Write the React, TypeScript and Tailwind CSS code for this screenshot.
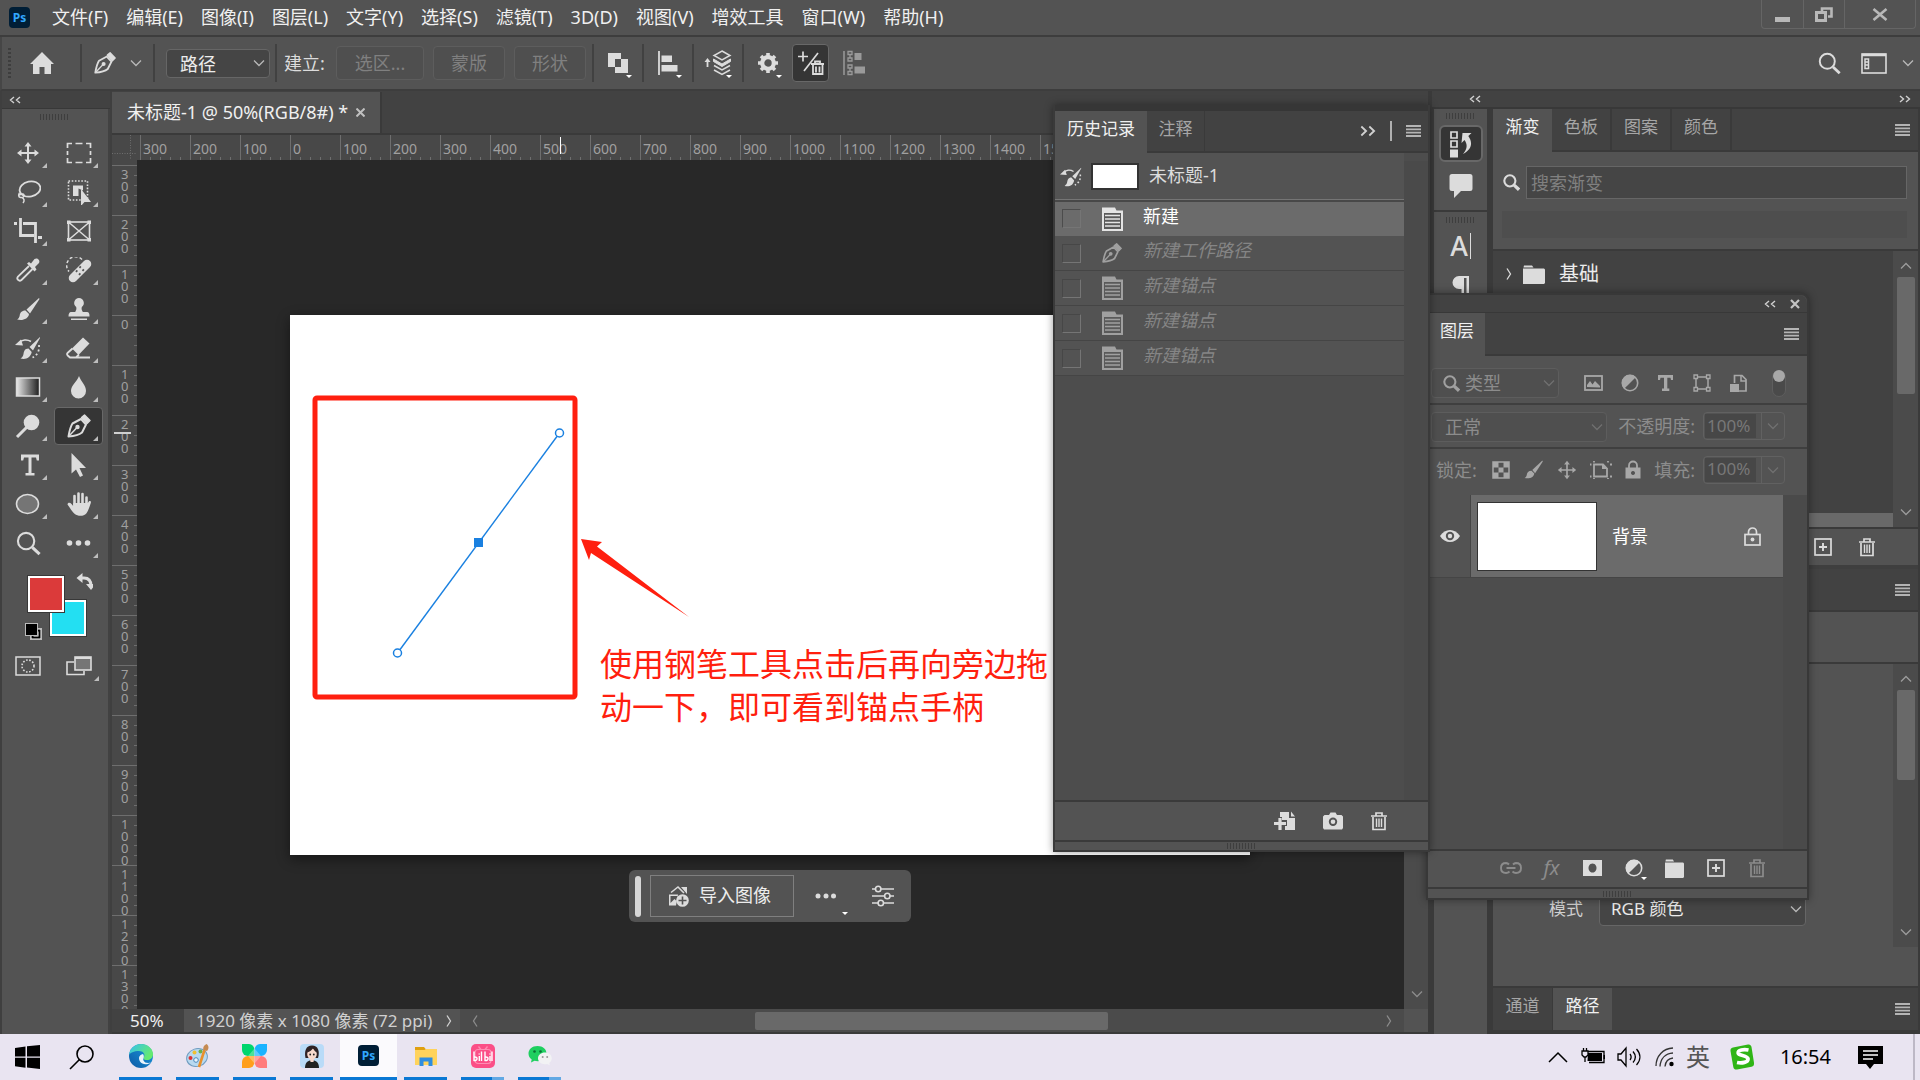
import { useState } from 'react';
import type { ReactNode } from 'react';
import clsx from 'clsx';

const MENUS = ['文件(F)', '编辑(E)', '图像(I)', '图层(L)', '文字(Y)', '选择(S)', '滤镜(T)', '3D(D)', '视图(V)', '增效工具', '窗口(W)', '帮助(H)'];

const H_LABELS = [300, 200, 100, 0, 100, 200, 300, 400, 500, 600, 700, 800, 900, 1000, 1100, 1200, 1300, 1400, 1500, 1600, 1700, 1800, 1900, 2000, 2100, 2200];
const V_LABELS = [300, 200, 100, 0, 100, 200, 300, 400, 500, 600, 700, 800, 900, 1000, 1100, 1200, 1300];

type IconProps = { w?: number; h?: number; className?: string; children: ReactNode };

function Icon({ w = 26, h = 26, className, children }: IconProps) {
  return (
    <svg width={w} height={h} viewBox={`0 0 ${w} ${h}`} fill="none" stroke="none" className={clsx('shrink-0', className)} aria-hidden="true">
      {children}
    </svg>
  );
}

/* ---------- shared icons ---------- */

function Chevron({ dir = 'down', className = 'text-[#b8b8b8]' }: { dir?: 'down' | 'up' | 'left' | 'right'; className?: string }) {
  const d = {
    down: 'M1 3.5l5 5 5-5',
    up: 'M1 8.5l5-5 5 5',
    left: 'M8 0.5L4.500 6l3.500 5.500',
    right: 'M4 0.5L7.500 6 4 11.500',
  }[dir];
  return (
    <Icon w={12} h={12} className={className}>
      <path d={d} stroke="currentColor" strokeWidth="1.3" />
    </Icon>
  );
}

function DoubleChevron({ right = false, big = false }: { right?: boolean; big?: boolean }) {
  return (
    <svg width={big ? 16 : 12} height={big ? 12 : 8} viewBox="0 0 12 8" preserveAspectRatio="none" fill="none" stroke="#d0d0d0" strokeWidth="1.4" aria-hidden="true">
      <path d={right ? 'M1 1l3.500 3L1 7M7 1l3.500 3L7 7' : 'M5 1L1.500 4 5 7M11 1L7.500 4 11 7'} />
    </svg>
  );
}

function Hamburger() {
  return (
    <Icon w={15} h={12}>
      <path d="M0 1h15M0 4.300h15M0 7.600h15M0 11h15" stroke="#b4b4b4" strokeWidth="1.8" />
    </Icon>
  );
}

function Grip() {
  return <div className="h-[6px] w-[29px] shrink-0 bg-[repeating-linear-gradient(to_right,#3e3e3e_0_1px,transparent_1px_3px)]" />;
}

function PenIcon({ size = 26, className = 'text-[#dcdcdc]' }: { size?: number; className?: string }) {
  return (
    <svg width={size} height={size} viewBox="0 0 26 26" fill="none" className={clsx('shrink-0', className)} aria-hidden="true">
      <path d="M2.500 23.500c1-6 2-10 4-13L15 6l5 5.500-4 8c-3 2.500-7 3.500-13.500 4z" stroke="currentColor" strokeWidth="2" strokeLinejoin="round" />
      <path d="M15.500 4.500L18.500 2l5.500 5.500-3 3z" fill="currentColor" stroke="currentColor" strokeWidth="1.500" strokeLinejoin="round" />
      <path d="M3 23l8-8.500" stroke="currentColor" strokeWidth="1.500" />
      <circle cx="11.500" cy="14" r="2.200" fill="currentColor" />
    </svg>
  );
}

function HistoryBrush({ size = 26 }: { size?: number }) {
  return (
    <svg width={size} height={size} viewBox="0 0 26 26" fill="none" className="shrink-0 text-[#dcdcdc]" aria-hidden="true">
      <path d="M25 2L14.500 12l3.500 3.500L25 3z" fill="currentColor" />
      <path d="M13.500 13.500c-4 0-4.500 3-5 5.500-.3 2-1.500 3.500-3 4.500 5 1.500 10-.500 11.200-6.500z" fill="currentColor" />
      <path d="M0 10l6-5.500 2 6z" fill="currentColor" />
      <path d="M4 8c3-3.500 8-4 12-1.500" stroke="currentColor" strokeWidth="1.600" />
      <path d="M24 10c.5 6-1.500 10-6.500 12.500" stroke="currentColor" strokeWidth="1.800" strokeDasharray="2 2.500" />
    </svg>
  );
}

function BrushIcon({ size = 26, className = 'text-[#dcdcdc]' }: { size?: number; className?: string }) {
  return (
    <svg width={size} height={size} viewBox="0 0 26 26" fill="currentColor" className={clsx('shrink-0', className)} aria-hidden="true">
      <path d="M24 2L11.500 13.500l3.500 4L24.500 3z" />
      <path d="M10.500 14.500c-4 0-5.500 2.500-5.800 5-.2 1.800-1.400 3.500-2.700 4 5.500 1.500 11.500-.500 12-5.500z" />
    </svg>
  );
}

function MagnifierIcon({ size = 26, heavy = false, className = 'text-[#dcdcdc]' }: { size?: number; heavy?: boolean; className?: string }) {
  return (
    <svg width={size} height={size} viewBox="0 0 26 26" fill="none" stroke="currentColor" className={clsx('shrink-0', className)} aria-hidden="true">
      <circle cx="10.500" cy="10.500" r="8.500" strokeWidth={heavy ? 3.2 : 2.2} />
      <path d="M17 17l7.500 7" strokeWidth={heavy ? 5 : 3.2} />
    </svg>
  );
}

function TrashIcon({ className = 'text-[#dcdcdc]' }: { className?: string }) {
  return (
    <Icon w={18} h={20} className={className}>
      <path d="M1 5h16M6 4.500V2h6v2.500" stroke="currentColor" strokeWidth="1.700" />
      <path d="M3 6v12.500h12V6" stroke="currentColor" strokeWidth="1.700" />
      <path d="M6.500 7.500V16M9 7.500V16M11.500 7.500V16" stroke="currentColor" strokeWidth="1.400" />
    </Icon>
  );
}

function AddIcon() {
  return (
    <Icon w={18} h={18}>
      <rect x="1" y="1" width="16" height="16" stroke="#dcdcdc" strokeWidth="1.700" />
      <path d="M5 9h8M9 5v8" stroke="#dcdcdc" strokeWidth="1.900" />
    </Icon>
  );
}

function FolderIcon({ w = 22 }: { w?: number }) {
  return (
    <svg width={w} height="19" viewBox="0 0 22 19" preserveAspectRatio="none" fill="#dcdcdc" aria-hidden="true">
      <path d="M1 0.500h8l1.500 2H0.500zM0 3.500h21l1 1V18l-1 1H0z" />
    </svg>
  );
}

function HalfCircle({ className = 'text-[#dcdcdc]' }: { className?: string }) {
  return (
    <Icon w={18} h={18} className={className}>
      <circle cx="9" cy="9" r="7.700" stroke="currentColor" strokeWidth="1.600" />
      <path d="M14.800 3.200A8.200 8.200 0 0 0 3.200 14.800z" fill="currentColor" />
    </Icon>
  );
}

function MoveIcon({ size = 24, className = 'text-[#dcdcdc]' }: { size?: number; className?: string }) {
  return (
    <svg width={size} height={size} viewBox="0 0 24 24" fill="currentColor" className={clsx('shrink-0', className)} aria-hidden="true">
      <path d="M12 1l3.500 4.500H13V11h5.500V8.500L23 12l-4.500 3.500V13H13v5.500h2.500L12 23l-3.500-4.500H11V13H5.500v2.500L1 12l4.500-3.500V11H11V5.500H8.500z" />
    </svg>
  );
}

function PsLogo({ className }: { className: string }) {
  return (
    <span className={clsx('flex items-center justify-center rounded-[4px] bg-[#001e36] font-bold text-[#31a8ff]', className)}>Ps</span>
  );
}

/* ---------- title / menu bar ---------- */

function MenuBar() {
  return (
    <header className="flex h-[37px] shrink-0 items-start border-b-2 border-[#3d3d3d] bg-[#535353]">
      <div className="flex h-[35px] items-center pl-[9px]">
        <PsLogo className="mr-[13px] size-[21px] text-xs leading-none" />
        <nav className="flex pb-[2px]">
          {MENUS.map((m) => (
            <button key={m} type="button" className="px-[9px] text-lg leading-[26px] text-[#f0f0f0]">{m}</button>
          ))}
        </nav>
      </div>
      <div className="mr-[4px] ml-auto flex h-[29px] divide-x divide-[#656565] rounded-b border border-t-0 border-[#656565]">
        <button type="button" aria-label="最小化" className="flex w-[42px] items-end justify-center pb-[6px]">
          <span className="h-[5px] w-[15px] bg-[#b8b8b8]" />
        </button>
        <button type="button" aria-label="还原" className="flex w-[41px] items-center justify-center">
          <Icon w={18} h={15}>
            <path d="M7 5V1.500h9.500v8H13" stroke="#b8b8b8" strokeWidth="2.600" />
            <rect x="1.500" y="5.500" width="9" height="8" stroke="#b8b8b8" strokeWidth="3" />
          </Icon>
        </button>
        <button type="button" aria-label="关闭" className="flex w-[70px] items-center justify-center">
          <Icon w={16} h={13}>
            <path d="M1.500 1l13 11M14.500 1l-13 11" stroke="#b8b8b8" strokeWidth="2.600" />
          </Icon>
        </button>
      </div>
    </header>
  );
}

/* ---------- options bar ---------- */

function Sep() {
  return <div className="h-[38px] w-[2px] shrink-0 bg-[#414141]" />;
}

function DropMark() {
  return <span className="absolute right-0 bottom-0 border-x-[3px] border-t-[3px] border-x-transparent border-t-white" />;
}

function OptionIcon({ label, children }: { label: string; children: ReactNode }) {
  return (
    <div className="flex w-[48px] justify-center">
      <button type="button" aria-label={label} className="relative flex h-[30px] w-[28px] items-center justify-center">
        {children}
        <DropMark />
      </button>
    </div>
  );
}

function OptionsBar() {
  return (
    <div className="flex h-[54px] shrink-0 items-center border-b-2 border-l-2 border-b-[#3d3d3d] border-l-[#464646] bg-[#535353] text-lg">
      <div className="ml-[6px] h-[30px] w-[3px] bg-[repeating-linear-gradient(to_bottom,#3e3e3e_0_2px,transparent_2px_4px)]" />
      <button type="button" aria-label="主页" className="ml-[18px]">
        <Icon w={26} h={24}>
          <path d="M13 1L25 13h-3v10h-6.500v-7h-5v7H4V13H1z" fill="#dcdcdc" />
        </Icon>
      </button>
      <div className="ml-[25px]"><Sep /></div>
      <button type="button" aria-label="钢笔工具" className="ml-[11px] flex items-center gap-[13px]">
        <PenIcon size={24} />
        <Chevron />
      </button>
      <div className="mr-[11px] ml-[11px]"><Sep /></div>
      <label className="relative flex items-center">
        <span className="sr-only">工具模式</span>
        <select className="h-[29px] w-[104px] appearance-none rounded border border-[#666] bg-[#454545] pl-[13px] text-lg text-[#ececec]">
          <option>路径</option>
        </select>
        <span className="pointer-events-none absolute right-[5px]"><Chevron /></span>
      </label>
      <div className="mr-[7px] ml-[5px]"><Sep /></div>
      <span className="w-[46px] text-[#dcdcdc]">建立:</span>
      <div className="ml-[6px] flex gap-[9px] text-[#808080]">
        <button type="button" disabled className="h-[34px] w-[88px] rounded border border-[#5d5d5d] bg-[#4f4f4f] leading-none">选区...</button>
        <button type="button" disabled className="h-[34px] w-[72px] rounded border border-[#5d5d5d] bg-[#4f4f4f] leading-none">蒙版</button>
        <button type="button" disabled className="h-[34px] w-[72px] rounded border border-[#5d5d5d] bg-[#4f4f4f] leading-none">形状</button>
      </div>
      <div className="ml-[6px] flex items-center">
        <Sep />
        <OptionIcon label="路径操作">
          <Icon w={22} h={22}>
            <path d="M1 1h13v6h7v14H8v-6H1zM8 7v8h6V7z" fill="#dcdcdc" fillRule="evenodd" />
          </Icon>
        </OptionIcon>
        <Sep />
        <OptionIcon label="路径对齐">
          <Icon w={22} h={24}>
            <path d="M2 0v24" stroke="#dcdcdc" strokeWidth="1.800" />
            <path d="M4.500 4.500h10.500V11H4.500zM4.500 14h16v6.500h-16z" fill="#dcdcdc" />
          </Icon>
        </OptionIcon>
        <Sep />
        <OptionIcon label="路径排列">
          <Icon w={28} h={26}>
            <path d="M3.500 17V10" stroke="#dcdcdc" strokeWidth="1.800" />
            <path d="M0.500 12l3-4 3 4z" fill="#dcdcdc" />
            <path d="M18 1l8 4.500-8 4.500-8-4.500z" stroke="#dcdcdc" strokeWidth="1.500" />
            <path d="M9.500 9l8.500 5 8.500-5v2.500L18 16.500l-8.500-5z" fill="#dcdcdc" stroke="#dcdcdc" />
            <path d="M10 15.500l8 4.500 8-4.500M10 20l8 4.500 8-4.500" stroke="#dcdcdc" strokeWidth="1.500" />
          </Icon>
        </OptionIcon>
        <Sep />
        <OptionIcon label="设置">
          <Icon w={22} h={22}>
            <circle cx="11" cy="11" r="5.800" stroke="#dcdcdc" strokeWidth="4.200" />
            <path d="M11 1v3M11 18v3M1 11h3M18 11h3M4 4l2 2M16 16l2 2M4 18l2-2M16 6l2-2" stroke="#dcdcdc" strokeWidth="3.600" />
          </Icon>
        </OptionIcon>
      </div>
      <button type="button" aria-label="自动添加/删除" className="flex h-[38px] w-[37px] items-center justify-center rounded border border-[#686868] bg-[#353535]">
        <Icon w={28} h={26}>
          <path d="M1 6.500h10M6 1.500v10M21 3L7 21" stroke="#dcdcdc" strokeWidth="1.700" />
          <path d="M14 14h13M18 13.500V11.500h5v2M16 15v9h9.500v-9M19 16.500v6M22.500 16.500v6" stroke="#dcdcdc" strokeWidth="1.800" />
        </Icon>
      </button>
      <button type="button" aria-label="对齐边缘" className="ml-[14px]">
        <Icon w={22} h={26}>
          <path d="M1 1v24" stroke="#9a9a9a" strokeWidth="1.500" />
          <path d="M5 1.500h4v3H5zM5 8h4v3H5zM5 15h4v3H5zM5 21.500h4v3H5zM7 4.500V8M7 18v3.500" stroke="#9a9a9a" strokeWidth="1.300" />
          <path d="M11.500 3h7v7h-7zM11.500 16.500h10.500v7H11.500z" fill="#9a9a9a" />
        </Icon>
      </button>
      <div className="mr-[6px] ml-auto flex items-center">
        <button type="button" aria-label="搜索"><MagnifierIcon size={23} /></button>
        <button type="button" aria-label="工作区" className="ml-[20px] flex items-center gap-[15px]">
          <Icon w={26} h={21}>
            <rect x="1" y="1" width="24" height="19" stroke="#dcdcdc" strokeWidth="1.600" />
            <path d="M1 2h24" stroke="#dcdcdc" strokeWidth="2.500" />
            <path d="M4 6h3.500v9.500H4zM4 9h3.500M4 12h3.500" stroke="#dcdcdc" strokeWidth="1.500" />
          </Icon>
          <Chevron />
        </button>
      </div>
    </div>
  );
}

/* ---------- tools ---------- */

const C = '#dcdcdc';

const TOOLS: { name: string; noCorner?: boolean; icon: ReactNode }[] = [
  { name: '移动工具', icon: <MoveIcon /> },
  { name: '矩形选框工具', icon: <Icon><path d="M1.500 8V3.500H6M9.500 3.500h7M20 3.500h4.500V8M24.500 11v4M24.500 18v4.500H20M16.500 22.500h-7M6 22.500H1.500V18M1.500 15v-4" stroke={C} strokeWidth="1.700" /></Icon> },
  { name: '套索工具', icon: <Icon><ellipse cx="15" cy="10" rx="10.500" ry="7.500" transform="rotate(-12 15 10)" stroke={C} strokeWidth="1.800" /><path d="M4.500 14c-1 1.500-1.500 4 1 4.500s4-1 3.500-2.500-4-1-4.500.5M7 18.500c2 1 3 3 1 5.500" stroke={C} strokeWidth="1.500" /></Icon> },
  { name: '对象选择工具', icon: <Icon><rect x="2.500" y="2" width="19" height="19" stroke={C} strokeWidth="1.600" strokeDasharray="1.600 1.600" /><path d="M7 6.500h10v5l-4.500-2v7.500H7z" fill={C} /><path d="M15 10v17l3.500-4h6.500z" fill={C} /></Icon> },
  { name: '裁剪工具', icon: <Icon w={28}><path d="M6.500 0v17.500H20M0 5.500h3M9 5.500h12.500V25M24 19.500h4" stroke={C} strokeWidth="2.800" /></Icon> },
  { name: '图框工具', noCorner: true, icon: <Icon><rect x="2.500" y="4" width="21" height="18" stroke={C} strokeWidth="1.600" /><path d="M3 4.500l20 17M23 4.500l-20 17" stroke={C} strokeWidth="1.500" /><path d="M1 2.500h3.500V6H1zM21.500 2.500H25V6h-3.500zM1 20h3.500v3.500H1zM21.500 20H25v3.500h-3.500z" fill={C} /></Icon> },
  { name: '吸管工具', icon: <Icon><path d="M14 9L3 19.500c-2 2.500 1 5.500 3.500 3.500L17.500 12" stroke={C} strokeWidth="1.800" /><path d="M12 6.500L14 5l2 1.500 3.500-4.500c3-2 6 1.500 4.500 4L20 10l1.500 2.500-2 2z" fill={C} /></Icon> },
  { name: '修复画笔工具', icon: <Icon><path d="M16 2.500A8.500 8.500 0 0 0 3 14.500" stroke={C} strokeWidth="1.500" strokeDasharray="3 2.200" /><path d="M7 21L21 7" stroke={C} strokeWidth="8.500" strokeLinecap="round" /><path d="M10 13.500l5.500 5.500M13.500 9.500l6 6" stroke="#535353" strokeWidth="2" strokeDasharray="1.800 2.500" /></Icon> },
  { name: '画笔工具', icon: <BrushIcon /> },
  { name: '仿制图章工具', icon: <Icon><path d="M13 2a5 5 0 0 1 2.800 9c-.6 2 .2 3.500 1 5H21c2 0 2.500 1.500 2.500 4.500h-21C2.500 17.500 3.500 16 5 16h4.200c.8-1.500 1.600-3 1-5A5 5 0 0 1 13 2zM5 22.500h16V24H5z" fill={C} /></Icon> },
  { name: '历史记录画笔工具', icon: <HistoryBrush /> },
  { name: '橡皮擦工具', icon: <Icon><path d="M17 2.500l6.500 6L12.500 20 6 13.500z" fill={C} /><path d="M6.500 13.500l-5 4.500c-.6.7-.6 1.500 0 2.300l2.500 2.200h6l3-3M9 22.500h15" stroke={C} strokeWidth="1.800" /></Icon> },
  { name: '渐变工具', icon: <Icon><defs><linearGradient id="g"><stop stopColor="#e8e8e8" /><stop offset="1" stopColor="#1c1c1c" /></linearGradient></defs><rect x="1.500" y="4" width="23" height="18" fill="url(#g)" stroke={C} strokeWidth="1.500" /></Icon> },
  { name: '模糊工具', icon: <Icon><path d="M13 2c2 6 7 9 7 15a7 7 0 0 1-15 0c0-6 6-9 8-15z" fill={C} /></Icon> },
  { name: '减淡工具', icon: <Icon><circle cx="16.500" cy="9.500" r="7.800" fill={C} /><path d="M12 14L2 24" stroke={C} strokeWidth="3" /></Icon> },
  { name: '钢笔工具', icon: <PenIcon /> },
  { name: '文字工具', icon: <Icon><path d="M6 2.500h18v6h-2.200l-.8-3h-4.500v15.500h3V23.500h-9V21h3V5.500H9l-.8 3H6z" fill={C} /></Icon> },
  { name: '路径选择工具', icon: <Icon><path d="M5.500 1v20.500l4.500-4 4 7.500 3-1.500-3.500-7.500H20z" fill={C} /></Icon> },
  { name: '椭圆工具', icon: <Icon><ellipse cx="12.500" cy="13" rx="11" ry="9.500" fill="#757575" stroke={C} strokeWidth="1.600" /></Icon> },
  { name: '抓手工具', icon: <Icon><path d="M8.500 14V5M12.500 13V2.500M16.500 13V3M20.500 14V6.500" stroke={C} strokeWidth="2.600" strokeLinecap="round" /><path d="M7.200 12h14.600l1-1.500c1.500-1 2.500 0 2 1.500-1.500 4-2.500 8-4.500 10.500-2.500 3-8.500 3-11.500.5C6 20.500 4 17 1.500 13.500 1.500 11.500 4 11 5.500 13l1.700 2z" fill={C} /></Icon> },
  { name: '缩放工具', noCorner: true, icon: <MagnifierIcon size={25} /> },
  { name: '更多工具', icon: <Icon><g fill={C}><circle cx="3.500" cy="13" r="2.800" /><circle cx="12.500" cy="13" r="2.800" /><circle cx="21.500" cy="13" r="2.800" /></g></Icon> },
];

function ToolsPanel() {
  const [active, setActive] = useState('钢笔工具');
  return (
    <aside className="flex w-[112px] shrink-0 flex-col border-x-2 border-[#3f3f3f] bg-[#424242]">
      <div className="flex h-[18px] items-center border-b border-[#383838] pl-[7px]"><DoubleChevron /></div>
      <div className="mr-[2px] flex flex-1 flex-col bg-[#535353] pt-[5px]">
        <div className="pl-[38px]"><Grip /></div>
        <div className="mt-[14px] grid grid-cols-[48px_49px] gap-x-[2px] pl-[2px]">
          {TOOLS.map((t) => (
            <button
              key={t.name}
              type="button"
              title={t.name}
              onClick={() => setActive(t.name)}
              className={clsx(
                'relative mb-px flex h-[38px] items-center justify-center rounded border',
                active === t.name ? 'border-[#686868] bg-[#353535]' : 'border-transparent',
              )}
            >
              {t.icon}
              {!t.noCorner && <span className="absolute right-[4px] bottom-[3px] border-b-[5px] border-l-[5px] border-b-[#bdbdbd] border-l-transparent" />}
            </button>
          ))}
        </div>
        <div className="mt-[10px] pl-[21px]">
          <Icon w={70} h={70}>
            <rect x="28" y="28" width="34" height="34" fill="#23dff2" stroke="#fff" strokeWidth="2" />
            <rect x="26.500" y="26.500" width="37" height="37" stroke="#383838" />
            <rect x="6" y="4" width="34" height="34" fill="#db3a3a" stroke="#fff" strokeWidth="2" />
            <rect x="4.500" y="2.500" width="37" height="37" stroke="#383838" />
            <path d="M56 5h5c5 0 7 3 7 8" stroke="#dcdcdc" strokeWidth="3" />
            <path d="M53.500 5l6-5v10zM63 11h10l-5 6z" fill="#dcdcdc" />
            <rect x="7.500" y="55.500" width="11" height="11" fill="#fff" stroke="#bbb" />
            <rect x="9.500" y="57.500" width="7" height="7" fill="#fff" stroke="#000" strokeWidth="2" />
            <rect x="2.500" y="50.500" width="12" height="12" fill="#000" stroke="#bbb" />
          </Icon>
        </div>
        <div className="mt-[13px] grid grid-cols-[48px_49px] gap-x-[2px] pl-[2px]">
          <button type="button" aria-label="快速蒙版" className="flex justify-center">
            <Icon w={26} h={20}>
              <rect x="1" y="1" width="24" height="18" stroke={C} strokeWidth="1.500" />
              <circle cx="13" cy="10" r="6" stroke={C} strokeWidth="1.600" strokeDasharray="1.600 1.600" />
            </Icon>
          </button>
          <button type="button" aria-label="屏幕模式" className="relative flex h-[26px] justify-center">
            <Icon w={26} h={20}>
              <path d="M8 6H1v12.500h17V15" stroke={C} strokeWidth="1.600" />
              <rect x="9" y="1" width="16" height="13" fill="#757575" stroke={C} strokeWidth="1.600" />
              <path d="M9 2h16" stroke={C} strokeWidth="2" />
            </Icon>
            <span className="absolute right-[4px] bottom-[1px] border-b-[5px] border-l-[5px] border-b-[#bdbdbd] border-l-transparent" />
          </button>
        </div>
      </div>
    </aside>
  );
}

/* ---------- document ---------- */

function HorizontalRuler() {
  return (
    <div className="relative flex h-[25px] overflow-hidden bg-[#484848] pl-[3px]">
      {H_LABELS.map((n, i) => (
        <div key={i} className="flex w-[50px] shrink-0 flex-col justify-between border-l border-[#6e6e6e]">
          <span className="pt-[6px] pl-[2px] text-sm leading-[16px] text-[#a0a0a0]">{n}</span>
          <div className="h-[3px] bg-[repeating-linear-gradient(to_right,transparent_0_9px,#6e6e6e_9px_10px)]" />
        </div>
      ))}
      <div className="absolute top-[2px] left-[423px] h-[17px] w-px bg-white" />
    </div>
  );
}

function VerticalRuler() {
  return (
    <div className="relative w-[25px] shrink-0 overflow-hidden bg-[#484848] pt-[5px]">
      {V_LABELS.map((n, i) => (
        <div key={i} className="flex h-[50px] justify-between border-t border-[#6e6e6e]">
          <span className="ml-[9px] w-[8px] pt-[2px] text-[13px] leading-[12px] break-all text-[#a0a0a0]">{n}</span>
          <div className="w-[3px] bg-[repeating-linear-gradient(to_bottom,transparent_0_9px,#6e6e6e_9px_10px)]" />
        </div>
      ))}
      <div className="absolute top-[272px] left-[2px] h-[2px] w-[17px] bg-[#d0d0d0]" />
    </div>
  );
}

function Canvas() {
  return (
    <div className="relative min-w-0 flex-1 overflow-hidden bg-[#282828]">
      <div className="absolute top-[155px] left-[153px] h-[540px] w-[960px] bg-white shadow-[0_4px_12px_rgba(0,0,0,0.45)]">
        <svg width="500" height="420" viewBox="0 0 500 420" fill="none" className="absolute top-0 left-0" aria-hidden="true">
          <rect x="25" y="83" width="260" height="299" rx="2" stroke="#ff1f0f" strokeWidth="5" />
          <path d="M107.500 338L269.500 118" stroke="#1a80e0" strokeWidth="1.400" />
          <circle cx="107.500" cy="338" r="4" fill="#fff" stroke="#1a80e0" strokeWidth="1.500" />
          <circle cx="269.500" cy="118" r="4" fill="#fff" stroke="#1a80e0" strokeWidth="1.500" />
          <rect x="184" y="223" width="9" height="9" fill="#1a80e0" />
          <path d="M291 224l21 3-5 4.500L399 302 301 238l-2 7z" fill="#ff1f0f" />
        </svg>
        <p className="absolute top-[327px] left-[310px] w-[460px] text-[32px] leading-[43px] text-[#ff1f0f]">
          使用钢笔工具点击后再向旁边拖
          <br />
          动一下，即可看到锚点手柄
        </p>
      </div>
      <div className="absolute top-[710px] left-[492px] flex h-[52px] w-[282px] items-center rounded-md bg-[#535353] pl-[6px]">
        <span className="h-[41px] w-[6px] rounded-full bg-[#d6d6d6]" />
        <button type="button" className="ml-[9px] flex h-[42px] w-[144px] items-center gap-[10px] border border-[#7f7f7f] pl-[17px] text-lg leading-none text-[#ececec]">
          <Icon w={21} h={21}>
            <path d="M3 6.500L10 1l6 6" stroke={C} strokeWidth="1.500" />
            <path d="M13 1h6v7zM1 8.500h9l-2 11H1z" fill={C} />
            <path d="M2.500 10h7l-1 5-2-2-4 4z" fill="#535353" />
            <circle cx="14.500" cy="14.500" r="6.300" fill={C} />
            <path d="M14.500 10.500v8M10.500 14.500h8" stroke="#535353" strokeWidth="1.600" />
          </Icon>
          <span className="pb-[3px]">导入图像</span>
        </button>
        <button type="button" aria-label="更多选项" className="relative ml-[20px] flex h-[38px] w-[34px] items-center">
          <Icon w={24} h={6}><g fill={C}><circle cx="4" cy="3" r="2.500" /><circle cx="12" cy="3" r="2.500" /><circle cx="19.500" cy="3" r="2.500" /></g></Icon>
          <DropMark />
        </button>
        <button type="button" aria-label="属性" className="ml-[24px]">
          <Icon w={22} h={22}>
            <path d="M0 4h3.500M9 4h13M0 11h12.500M18 11h4M0 18h6M11.500 18H22" stroke={C} strokeWidth="1.600" />
            <g stroke={C} strokeWidth="1.600"><circle cx="6.200" cy="4" r="2.700" /><circle cx="15.300" cy="11" r="2.700" /><circle cx="8.800" cy="18" r="2.700" /></g>
          </Icon>
        </button>
      </div>
    </div>
  );
}

function DocumentArea() {
  return (
    <main className="flex min-w-0 flex-1 flex-col border-r-2 border-[#3a3a3a] bg-[#4b4b4b]">
      <div className="flex h-[44px] border-b-2 border-[#3a3a3a] bg-[#424242]">
        <div className="mt-px flex w-[270px] items-center border-r-2 border-[#3a3a3a] bg-[#535353] pl-[15px]">
          <span className="w-[229px] pb-[2px] text-lg whitespace-nowrap text-[#f0f0f0]">未标题-1 @ 50%(RGB/8#) *</span>
          <button type="button" aria-label="关闭文档">
            <Icon w={9} h={9}><path d="M0.500 0.500l8 8M8.500 0.500l-8 8" stroke="#c0c0c0" strokeWidth="2" /></Icon>
          </button>
        </div>
      </div>
      <div className="flex min-h-0 flex-1">
        <div className="flex min-w-0 flex-1 flex-col">
          <div className="flex">
            <Icon w={25} h={25} className="bg-[#484848]">
              <path d="M0 18.500h25M18.500 0v25" stroke="#6e6e6e" strokeDasharray="1 1.500" />
            </Icon>
            <div className="min-w-0 flex-1"><HorizontalRuler /></div>
          </div>
          <div className="flex min-h-0 flex-1">
            <VerticalRuler />
            <Canvas />
          </div>
        </div>
        <div className="flex w-[24px] flex-col justify-end bg-[#4b4b4b] pb-[9px] pl-[7px]"><Chevron className="text-[#8c8c8c]" /></div>
      </div>
      <div className="flex h-[25px] shrink-0 border-b-2 border-[#3a3a3a] text-[17px] leading-[23px]">
        <span className="w-[72px] bg-[#424242] pl-[18px] text-[#f0f0f0]">50%</span>
        <button type="button" className="flex w-[276px] items-center justify-between bg-[#535353] pr-[5px] pl-[12px] whitespace-nowrap text-[#d0d0d0]">
          1920 像素 x 1080 像素 (72 ppi)
          <Chevron dir="right" className="text-[#d0d0d0]" />
        </button>
        <div className="flex flex-1 items-center bg-[#4b4b4b] pl-[9px]">
          <Chevron dir="left" className="text-[#8c8c8c]" />
          <div className="ml-[274px] h-[18px] w-[353px] rounded-[2px] bg-[#696969]" />
          <Chevron dir="right" className="mr-[9px] ml-auto text-[#8c8c8c]" />
        </div>
        <div className="w-[24px] bg-[#535353]" />
      </div>
    </main>
  );
}

/* ---------- right dock ---------- */

function IconDock() {
  return (
    <div className="flex w-[59px] shrink-0 flex-col items-center border-r-4 border-l-2 border-[#3a3a3a] bg-[#535353] pt-[4px]">
      <Grip />
      <button type="button" aria-label="历史记录" className="mt-[6px] flex h-[37px] w-[44px] items-center justify-center rounded-md border-2 border-[#686868] bg-[#353535]">
        <Icon w={24} h={28}>
          <path d="M2 2h6v6H2zM2 11h6v6H2z" stroke={C} strokeWidth="1.700" />
          <path d="M1 19.500h8v8H1z" fill={C} />
          <path d="M13.500 3h9l-3.200 3c5 7 3.200 14-5.300 18 4-4.500 5-9 1.500-14l-3 3z" fill={C} />
        </Icon>
      </button>
      <button type="button" aria-label="注释" className="mt-[10px]">
        <Icon w={24} h={26}><path d="M3 2h18a2.500 2.500 0 0 1 2.500 2.500v12A2.500 2.500 0 0 1 21 19h-9l-7 7v-7H3A2.500 2.500 0 0 1 .5 16.500v-12A2.500 2.500 0 0 1 3 2z" fill={C} /></Icon>
      </button>
      <div className="mt-[12px] mb-[5px] h-[2px] w-full shrink-0 bg-[#3a3a3a]" />
      <Grip />
      <button type="button" aria-label="字符" className="mt-[9px] flex h-[27px] items-center text-[#dcdcdc]">
        <span className="text-[27px] leading-none font-medium">A</span>
        <span className="ml-[2px] h-[26px] w-px bg-[#dcdcdc]" />
      </button>
      <button type="button" aria-label="段落" className="mt-[17px]">
        <Icon w={18} h={24}><path d="M17 0v24h-2.500V2H12v22H9.500V13H7A6.500 6.500 0 0 1 7 0z" fill={C} /></Icon>
      </button>
    </div>
  );
}

function ScrollTrack({ thumb }: { thumb: string }) {
  return (
    <div className="flex w-[25px] shrink-0 flex-col items-center bg-[#4b4b4b] pt-[9px] pb-[9px]">
      <Chevron dir="up" className="text-[#9c9c9c]" />
      <div className={clsx('mt-[5px] mb-auto w-[18px] rounded-[2px] bg-[#696969]', thumb)} />
      <Chevron className="text-[#9c9c9c]" />
    </div>
  );
}

function PanelStack() {
  return (
    <div className="flex w-[429px] shrink-0 flex-col border-r-2 border-l-2 border-[#3a3a3a] bg-[#535353]">
      <div role="tablist" className="flex h-[43px] shrink-0 border-b-2 border-[#3a3a3a] bg-[#424242] text-[17px] text-[#a6a6a6]">
        <button type="button" role="tab" aria-selected="true" className="-mb-[2px] w-[59px] bg-[#535353] pb-[7px] text-[#f0f0f0]">渐变</button>
        <button type="button" role="tab" className="w-[60px] border-r-2 border-[#3a3a3a] pb-[5px]">色板</button>
        <button type="button" role="tab" className="w-[60px] border-r-2 border-[#3a3a3a] pb-[5px]">图案</button>
        <button type="button" role="tab" className="w-[60px] border-r-2 border-[#3a3a3a] pb-[5px]">颜色</button>
        <button type="button" aria-label="面板菜单" className="mr-[8px] ml-auto"><Hamburger /></button>
      </div>
      <div className="flex h-[99px] shrink-0 flex-col border-b-2 border-[#3a3a3a] pt-[14px] pr-[11px] pl-[9px]">
        <label className="flex items-center gap-[6px] pl-px">
          <MagnifierIcon size={17} heavy />
          <span className="sr-only">搜索渐变</span>
          <input placeholder="搜索渐变" className="h-[33px] min-w-0 flex-1 border border-[#666] bg-[#454545] pl-[4px] text-lg text-[#dcdcdc] placeholder:text-[#808080]" />
        </label>
        <div className="mt-[12px] h-[27px] bg-[#4e4e4e]" />
      </div>
      <div className="flex h-[278px] shrink-0 border-b-2 border-[#3a3a3a]">
        <div className="flex flex-1 flex-col bg-[#424242]">
          <button type="button" className="flex h-[46px] items-center pl-[10px] text-xl text-[#ececec]">
            <Chevron dir="right" className="mr-[8px] text-[#dcdcdc]" />
            <FolderIcon />
            <span className="ml-[14px]">基础</span>
          </button>
          <div className="mt-auto h-[14px] bg-[#696969]" />
        </div>
        <ScrollTrack thumb="h-[117px]" />
      </div>
      <div className="flex h-[40px] shrink-0 items-center justify-end gap-[26px] border-b-4 border-[#3f3f3f] pr-[42px]">
        <button type="button" aria-label="新建"><AddIcon /></button>
        <button type="button" aria-label="删除"><TrashIcon /></button>
      </div>
      <div className="flex h-[43px] shrink-0 items-center justify-end border-b-2 border-[#3a3a3a] bg-[#424242] pr-[8px]">
        <button type="button" aria-label="面板菜单"><Hamburger /></button>
      </div>
      <div className="h-[52px] shrink-0 border-b-2 border-[#3a3a3a]" />
      <div className="flex h-[283px] shrink-0">
        <div className="flex flex-1 items-end pb-[21px] pl-[56px]">
          <label className="flex items-center text-[17px] text-[#d0d0d0]">
            模式
            <span className="relative ml-[16px] flex items-center">
              <select className="h-[34px] w-[207px] appearance-none rounded border border-[#666] bg-[#454545] pl-[11px] text-[17px] text-[#ececec]">
                <option>RGB 颜色</option>
              </select>
              <span className="pointer-events-none absolute right-[4px]"><Chevron /></span>
            </span>
          </label>
        </div>
        <ScrollTrack thumb="h-[90px]" />
      </div>
      <div className="flex-1" />
      <div role="tablist" className="flex h-[48px] shrink-0 border-t-2 border-b-4 border-[#3a3a3a] bg-[#424242] text-[17px] text-[#a6a6a6]">
        <button type="button" role="tab" className="w-[60px] border-r border-[#3a3a3a] pb-[7px]">通道</button>
        <button type="button" role="tab" aria-selected="true" className="w-[59px] bg-[#535353] pb-[7px] text-[#f0f0f0]">路径</button>
        <button type="button" aria-label="面板菜单" className="mr-[8px] ml-auto"><Hamburger /></button>
      </div>
    </div>
  );
}

function RightDock() {
  return (
    <div className="flex w-[490px] shrink-0 flex-col border-l-2 border-[#3a3a3a]">
      <div className="flex h-[18px] shrink-0 items-center justify-between border-b-2 border-[#383838] bg-[#424242] pr-[9px] pl-[37px]">
        <DoubleChevron />
        <DoubleChevron right />
      </div>
      <div className="flex min-h-0 flex-1">
        <IconDock />
        <PanelStack />
      </div>
    </div>
  );
}

/* ---------- floating panels ---------- */

function DocStateIcon({ className }: { className: string }) {
  return (
    <Icon w={22} h={24} className={className}>
      <path d="M1 0.500h13l1.500 3H22V24H1z" fill="currentColor" />
      <rect x="3" y="6" width="17" height="16" fill="#5a5a5a" />
      <path d="M4 8.500h15M4 12h15M4 15.500h15M4 19h15" stroke="currentColor" strokeWidth="1.500" />
    </Icon>
  );
}

const STATES = [
  { label: '新建', pen: false },
  { label: '新建工作路径', pen: true },
  { label: '新建锚点', pen: false },
  { label: '新建锚点', pen: false },
  { label: '新建锚点', pen: false },
];

function HistoryPanel() {
  const [current, setCurrent] = useState(0);
  return (
    <section className="absolute top-[105px] right-[490px] z-20 flex h-[747px] w-[377px] flex-col border-x-2 border-b-2 border-[#3a3a3a] bg-[#4d4d4d] shadow-[0_0_8px_rgba(0,0,0,0.4)]">
      <div className="h-[6px] shrink-0 bg-[#363636]" />
      <div role="tablist" className="flex h-[42px] shrink-0 border-b-2 border-[#3a3a3a] bg-[#424242] text-[17px] text-[#a6a6a6]">
        <button type="button" role="tab" aria-selected="true" className="-mb-[2px] w-[92px] bg-[#535353] pb-[6px] text-[#f0f0f0]">历史记录</button>
        <button type="button" role="tab" className="w-[58px] border-r border-[#3a3a3a] pb-[4px]">注释</button>
        <div className="mr-[7px] ml-auto flex items-center gap-[14px]">
          <DoubleChevron right big />
          <span className="h-[20px] w-[2px] bg-[#b0b0b0]" />
          <button type="button" aria-label="面板菜单"><Hamburger /></button>
        </div>
      </div>
      <div className="flex min-h-0 flex-1">
        <div className="flex-1">
          <div className="flex h-[47px] items-center border-b border-[#757575] bg-[#535353] pt-px pl-[5px]">
            <HistoryBrush size={22} />
            <span className="ml-[9px] h-[27px] w-[48px] border-2 border-[#333] bg-white" />
            <span className="ml-[10px] pb-[3px] text-lg leading-none text-[#dcdcdc]">未标题-1</span>
          </div>
          <div className="h-[2px] bg-[#484848]" />
          <ul>
            {STATES.map((s, i) => (
              <li key={i} className={clsx('flex items-center border-b', i === current ? 'h-[34px] border-[#6b6b6b] bg-[#6b6b6b]' : 'h-[35px] border-[#454545] bg-[#535353]')}>
                <input
                  type="checkbox"
                  aria-label={`源 ${i + 1}`}
                  className={clsx('ml-[7px] size-[19px] appearance-none border', i === current ? 'border-t-[#4c4c4c] border-r-[#757575] border-b-[#757575] border-l-[#4c4c4c]' : 'border-t-[#474747] border-r-[#757575] border-b-[#757575] border-l-[#474747]')}
                />
                <button
                  type="button"
                  onClick={() => setCurrent(i)}
                  className={clsx('flex flex-1 items-center gap-[20px] pl-[20px] text-lg leading-[28px]', i === current ? 'text-white' : 'text-[#858585] italic')}
                >
                  {s.pen ? <PenIcon size={22} className="text-[#a0a0a0]" /> : <DocStateIcon className={i === current ? 'text-[#e4e4e4]' : 'text-[#a0a0a0]'} />}
                  <span className="pb-[6px]">{s.label}</span>
                </button>
              </li>
            ))}
          </ul>
        </div>
        <div className="mt-[8px] w-[24px] bg-[#4a4a4a]" />
      </div>
      <div className="flex h-[40px] shrink-0 items-center justify-end gap-[27px] border-t-2 border-[#3a3a3a] bg-[#535353] pr-[40px]">
        <button type="button" aria-label="从当前状态创建新文档">
          <Icon w={22} h={20}>
            <path d="M6 1h9v6h6v12H11v-4h2V9H8V6H6zM17 0.500l4 5h-4z" fill={C} />
            <path d="M0 12.500h12M6 7v12" stroke={C} strokeWidth="3.200" />
          </Icon>
        </button>
        <button type="button" aria-label="创建新快照">
          <Icon w={20} h={18}>
            <path d="M1.500 3H6l1.500-2.500h5L14 3h4.500L20 4.500V16l-1 1.500H1L0 16V4.500z" fill={C} />
            <circle cx="10" cy="9.800" r="4.200" fill="#535353" />
            <circle cx="10" cy="9.800" r="2.300" fill={C} />
          </Icon>
        </button>
        <button type="button" aria-label="删除"><TrashIcon /></button>
      </div>
      <div className="flex h-[10px] shrink-0 items-center justify-center border-t-2 border-[#3a3a3a] bg-[#535353]"><Grip /></div>
    </section>
  );
}

function PercentField({ label }: { label: string }) {
  return (
    <label className="ml-auto flex items-center gap-[8px]">
      {label}
      <span className="flex h-[28px] w-[82px] rounded border border-[#616161]">
        <input defaultValue="100%" className="my-px ml-px w-[51px] bg-[#474747] pl-[2px] text-[17px] text-[#787878]" />
        <span className="ml-auto flex w-[23px] items-center justify-center border-l border-[#616161]"><Chevron className="text-[#707070]" /></span>
      </span>
    </label>
  );
}

function FooterButton({ label, children }: { label: string; children: ReactNode }) {
  return (
    <button type="button" aria-label={label} className="flex w-[41px] items-center justify-center text-xl leading-none text-[#8c8c8c]">
      {children}
    </button>
  );
}

function LayersPanel() {
  const g = '#a8a8a8';
  return (
    <section className="absolute top-[293px] right-[111px] z-10 flex h-[607px] w-[383px] flex-col rounded-tr-lg border-2 border-[#383838] bg-[#4d4d4d] shadow-[0_0_8px_rgba(0,0,0,0.4)]">
      <div className="flex h-[18px] shrink-0 items-center justify-end gap-[14px] rounded-tr-lg border-b border-[#383838] bg-[#424242] pr-[7px]">
        <DoubleChevron />
        <button type="button" aria-label="关闭">
          <Icon w={10} h={10}><path d="M1 1l8 8M9 1l-8 8" stroke="#c4c4c4" strokeWidth="2.200" /></Icon>
        </button>
      </div>
      <div className="flex h-[43px] shrink-0 border-b-2 border-[#3a3a3a] bg-[#424242]">
        <button type="button" className="-mb-[2px] w-[57px] bg-[#535353] pb-[7px] pl-px text-[17px] text-[#f0f0f0]">图层</button>
        <button type="button" aria-label="面板菜单" className="mr-[8px] ml-auto"><Hamburger /></button>
      </div>

      <div className="flex h-[49px] shrink-0 items-center border-b-2 border-[#3f3f3f] bg-[#535353] pt-[7px] pl-[3px]">
        <label className="relative flex items-center text-[#8c8c8c]">
          <span className="pointer-events-none absolute left-[12px]"><MagnifierIcon size={17} heavy className="text-[#a0a0a0]" /></span>
          <span className="sr-only">筛选</span>
          <select className="h-[30px] w-[128px] appearance-none rounded border border-[#5d5d5d] bg-[#4f4f4f] pl-[33px] text-lg">
            <option>类型</option>
          </select>
          <span className="pointer-events-none absolute right-[4px]"><Chevron className="text-[#707070]" /></span>
        </label>
        <div className="ml-[25px] flex items-center gap-[18px]">
          <button type="button" aria-label="像素图层">
            <Icon w={19} h={18}><rect x="1" y="2" width="17" height="14" stroke={g} strokeWidth="1.800" /><path d="M3 13V11l3-4 2.500 3.500L11 7l5 5v1.500z" fill={g} /></Icon>
          </button>
          <button type="button" aria-label="调整图层"><HalfCircle className="text-[#a8a8a8]" /></button>
          <button type="button" aria-label="文字图层">
            <Icon w={18} h={18}><path d="M1 1h15v5h-2l-.5-2.200h-3.200V14.500h2V17H5v-2.500h2V3.800H3.500L3 6H1z" fill={g} /></Icon>
          </button>
          <button type="button" aria-label="形状图层">
            <Icon w={18} h={18}><path d="M3 3h12v12H3z" stroke={g} strokeWidth="1.500" /><path d="M1 1h3.500v3.500H1zM13.500 1H17v3.500h-3.500zM1 13.500h3.500V17H1zM13.500 13.500H17V17h-3.500z" fill="#535353" stroke={g} strokeWidth="1.300" /></Icon>
          </button>
          <button type="button" aria-label="智能对象">
            <Icon w={18} h={19}><path d="M5.500 9V1.500H13l4 4V17h-7" stroke={g} strokeWidth="1.700" /><path d="M12 1.500V7h5" stroke={g} strokeWidth="1.500" /><path d="M1 10h9v8H1z" fill={g} /></Icon>
          </button>
        </div>
        <button type="button" aria-label="图层过滤开关" className="mr-[21px] ml-auto flex h-[27px] w-[14px] items-start rounded-full border border-[#5e5e5e] bg-[#4a4a4a]">
          <span className="-mt-px size-[12px] rounded-full bg-[#a8a8a8]" />
        </button>
      </div>

      <div className="flex h-[44px] shrink-0 items-center border-b-2 border-[#3f3f3f] bg-[#535353] pr-[22px] pl-[3px] text-lg text-[#8c8c8c]">
        <label className="relative flex items-center pt-[2px]">
          <span className="sr-only">混合模式</span>
          <select className="h-[30px] w-[176px] appearance-none rounded border border-[#5d5d5d] bg-[#4f4f4f] pl-[13px] text-lg">
            <option>正常</option>
          </select>
          <span className="pointer-events-none absolute right-[4px]"><Chevron className="text-[#707070]" /></span>
        </label>
        <PercentField label="不透明度:" />
      </div>

      <div className="flex h-[46px] shrink-0 items-center bg-[#535353] pr-[22px] pb-[5px] pl-[8px] text-lg text-[#8c8c8c]">
        锁定:
        <div className="ml-[15px] flex items-center gap-[13px]">
          <button type="button" aria-label="锁定透明像素">
            <Icon w={18} h={18}><rect x="1" y="1" width="16" height="16" stroke={g} strokeWidth="1.500" /><path d="M1 1h5.500v5.500H1zM11.500 1H17v5.500h-5.500zM6.500 6.500h5v5h-5zM1 11.500h5.500V17H1zM11.500 11.500H17V17h-5.500z" fill={g} /></Icon>
          </button>
          <button type="button" aria-label="锁定图像像素"><BrushIcon size={21} className="text-[#a8a8a8]" /></button>
          <button type="button" aria-label="锁定位置"><MoveIcon size={20} className="text-[#a8a8a8]" /></button>
          <button type="button" aria-label="防止嵌套">
            <Icon w={22} h={18}><path d="M4 3.500h9l4 4v8H4z" stroke={g} strokeWidth="1.800" /><path d="M4 0v1.500M18 0v1.500M0 3.500h1.500M20 3.500h2M0 15.500h1.500M20 15.500h2M4 17v1.500M18 17v1.500" stroke={g} strokeWidth="1.800" /><path d="M12 3v5h6z" fill={g} /></Icon>
          </button>
          <button type="button" aria-label="锁定全部">
            <Icon w={16} h={19}><path d="M4 8V5.500a4 4 0 0 1 8 0V8" stroke={g} strokeWidth="1.800" /><path d="M0.500 7.500h15v11h-15zM8 11a2 2 0 1 0 .01 0z" fill={g} fillRule="evenodd" /></Icon>
          </button>
        </div>
        <PercentField label="填充:" />
      </div>

      <div className="flex min-h-0 flex-1">
        <div className="flex-1">
          <div className="flex h-[83px] border-b border-[#454545] bg-[#535353]">
            <button type="button" aria-label="可见性" className="flex w-[43px] items-center justify-center border-r border-[#454545] pl-[2px]">
              <Icon w={20} h={14}><path d="M0 7c5-8 15-8 20 0-5 8-15 8-20 0z" fill={C} /><circle cx="10" cy="7" r="4.200" fill="#535353" /><circle cx="10" cy="7" r="2.200" fill={C} /></Icon>
            </button>
            <div className="flex flex-1 items-center bg-[#6b6b6b] pr-[22px] pl-[6px] text-lg text-white">
              <span className="h-[69px] w-[120px] border border-[#333] bg-white" />
              <span className="ml-[15px]">背景</span>
              <Icon w={17} h={19} className="ml-auto"><path d="M4.500 8V5a4 4 0 0 1 8 0v3" stroke={C} strokeWidth="1.700" /><rect x="1" y="7.500" width="15" height="10.500" stroke={C} strokeWidth="1.700" /><circle cx="8.500" cy="12.500" r="1.900" fill={C} /></Icon>
            </div>
          </div>
        </div>
        <div className="w-[24px] bg-[#4a4a4a]" />
      </div>

      <div className="flex h-[38px] shrink-0 items-center justify-end border-t-2 border-[#3a3a3a] bg-[#535353] pr-[30px] pb-[2px]">
        <FooterButton label="链接图层">
          <Icon w={22} h={14}><path d="M9 3.500A5 5 0 0 0 6 2C3 2 1 4 1 7s2 5 5 5c1.500 0 2.500-.5 3.500-1.500M13 3.500A5 5 0 0 1 16 2c3 0 5 2 5 5s-2 5-5 5c-1.500 0-2.500-.5-3.500-1.500M6.500 7h9" stroke="#8c8c8c" strokeWidth="1.900" /></Icon>
        </FooterButton>
        <FooterButton label="图层样式"><span className="italic">fx</span></FooterButton>
        <FooterButton label="图层蒙版">
          <Icon w={19} h={18}><path d="M0 1h19v16H0zM9.500 4.500a4 4.500 0 1 0 .01 0z" fill={C} fillRule="evenodd" /></Icon>
        </FooterButton>
        <FooterButton label="新建调整图层">
          <span className="relative flex h-[24px] w-[26px] items-center justify-center">
            <HalfCircle />
            <DropMark />
          </span>
        </FooterButton>
        <FooterButton label="新建组"><FolderIcon w={19} /></FooterButton>
        <FooterButton label="新建图层"><AddIcon /></FooterButton>
        <FooterButton label="删除图层"><TrashIcon className="text-[#8c8c8c]" /></FooterButton>
      </div>
      <div className="flex h-[11px] shrink-0 items-center justify-center border-t-2 border-[#3a3a3a] bg-[#535353]"><Grip /></div>
    </section>
  );
}

/* ---------- windows taskbar ---------- */

type TaskbarApp = { name: string; icon: ReactNode; state?: 'active' | 'multi' };

const APPS: TaskbarApp[] = [
  {
    name: 'Edge',
    icon: (
      <Icon w={24} h={24}>
        <defs>
          <linearGradient id="edgeA" x1="0" y1="1" x2="1" y2="0"><stop stopColor="#0c59a4" /><stop offset="1" stopColor="#1b9de2" /></linearGradient>
          <linearGradient id="edgeB" x1="0" y1="0" x2="1" y2="0.500"><stop stopColor="#35c1f1" /><stop offset="1" stopColor="#66eb6e" /></linearGradient>
        </defs>
        <circle cx="12" cy="12" r="12" fill="url(#edgeA)" />
        <path d="M0 11C1 4 6 0 12 0c7 0 12 5 12 10 0 4-3 6-6 6-3.500 0-4-1.500-3-3 1.500-3-1-6-5-6C5 7 1 9 0 11z" fill="url(#edgeB)" />
        <path d="M14 10c-4 1-5 4-3 7.500 2 3 7 4 11 1-3 1-6.500.5-7.500-2-.8-2 1.500-3.500-.5-6.500z" fill="#e9f3fb" />
      </Icon>
    ),
  },
  {
    name: '画图',
    icon: (
      <Icon w={24} h={24}>
        <ellipse cx="11" cy="13.500" rx="10.500" ry="8.800" transform="rotate(-18 11 13.500)" fill="#b8d9f0" stroke="#6f9cc0" />
        <circle cx="4.500" cy="14" r="2" fill="#d33" /><circle cx="8.500" cy="8.500" r="2" fill="#f0c030" /><circle cx="14.500" cy="7.500" r="2" fill="#6ab04c" /><circle cx="10" cy="16" r="2.300" fill="#eaf4fb" stroke="#4a88bb" />
        <path d="M13 23l5.500-17" stroke="#e8902c" strokeWidth="2.600" />
        <path d="M17.500 6c-1-3 1-5 3-6 2 1.500 3 4 .5 7z" fill="#c58a52" />
      </Icon>
    ),
  },
  {
    name: '应用',
    icon: (
      <Icon w={25} h={24}>
        <path d="M0 0h7a5.500 6 0 0 1 5.500 6v6H6a6 6 0 0 1-6-6z" fill="#00d66e" />
        <path d="M25 0h-7a5.500 6 0 0 0-5.500 6v6H19a6 6 0 0 0 6-6z" fill="#1ab3ff" />
        <path d="M0 24h7a5.500 6 0 0 0 5.500-6v-6H6a6 6 0 0 0-6 6z" fill="#ff9f1c" />
        <path d="M25 24h-7a5.500 6 0 0 1-5.500-6v-6H19a6 6 0 0 1 6 6z" fill="#ff7b7b" />
        <path d="M12.500 4.500l6.500 7.500-6.500 7.500L6 12z" fill="#fff" opacity="0.300" />
      </Icon>
    ),
  },
  {
    name: '助手',
    icon: (
      <Icon w={24} h={24}>
        <rect width="24" height="24" rx="4" fill="#b9dbf8" />
        <path d="M5.500 14C4 7 6 1.500 12 1.500S20 7 18 14z" fill="#2e2326" />
        <ellipse cx="12" cy="10" rx="4.800" ry="5.500" fill="#f8d9cc" />
        <path d="M7 8.500c3-.5 5-2.500 6-4.500 1 2.500 2.500 4 4.200 4.500-.7-4-2.700-5-5.200-5S7.500 4.500 7 8.500z" fill="#2e2326" />
        <path d="M5 24c0-5 2.500-7 5-7.500h4c2.500.5 5 2.500 5 7.500z" fill="#222" />
        <path d="M10 14.500h4l-.5 3.500h-3z" fill="#f8d9cc" />
        <circle cx="10.200" cy="10.500" r=".9" fill="#222" /><circle cx="13.800" cy="10.500" r=".9" fill="#222" />
      </Icon>
    ),
  },
  { name: 'Photoshop', state: 'active', icon: <PsLogo className="size-[21px] text-xs leading-none" /> },
  {
    name: '文件资源管理器',
    icon: (
      <Icon w={24} h={24}>
        <path d="M1 3h9l2 2.500V9H1z" fill="#e0a010" />
        <path d="M1 6h9.500l1.500-1h11v16H1z" fill="#ffd35c" />
        <path d="M5.500 22v-8.500h13V22h-4v-4.500h-5V22z" fill="#2f8de0" />
      </Icon>
    ),
  },
  {
    name: '哔哩哔哩',
    state: 'multi',
    icon: (
      <Icon w={24} h={24}>
        <rect width="24" height="24" rx="5" fill="#fb4f87" />
        <path d="M7.500 2.500L10 5.500M16.500 2.500L14 5.500" stroke="#ff8db3" strokeWidth="1.300" />
        <rect x="4" y="5.500" width="16" height="14" rx="3" stroke="#ff8db3" strokeWidth="1.200" />
        <path d="M3 7.500v9c4 .5 4-4 .3-3.500M8.300 12v5M10.500 7.500V17M14 7.500v9c4 .5 4-4 .3-3.500M19 12v5M21 7.500V17M8.200 9.500v1M18.900 9.500v1" stroke="#fff" strokeWidth="1.400" />
      </Icon>
    ),
  },
  {
    name: '微信',
    state: 'multi',
    icon: (
      <Icon w={24} h={24}>
        <path d="M9.500 2C4 2 .5 5.500.5 9.500c0 2.500 1.200 4.500 3.200 6L3 18.500l3.500-1.700c1 .2 2 .4 3 .4 5.500 0 9-3.500 9-7.700S15 2 9.500 2z" fill="#1fcf60" />
        <circle cx="6.500" cy="7.500" r="1.300" fill="#0b6e33" /><circle cx="12.500" cy="7.500" r="1.300" fill="#0b6e33" />
        <path d="M17 8.500c-4 0-7 2.600-7 5.800s3 5.900 7 5.900c.8 0 1.500-.1 2.200-.3l2.600 1.400-.6-2.400c1.700-1.100 2.600-2.700 2.600-4.600 0-3.200-2.900-5.800-6.800-5.800z" fill="#f2f2f4" />
        <circle cx="14.700" cy="13" r="1" fill="#999" /><circle cx="19.200" cy="13" r="1" fill="#999" />
      </Icon>
    ),
  },
];

function Taskbar() {
  return (
    <footer className="flex h-[46px] shrink-0 bg-[#e9e4f1] text-black">
      <button type="button" aria-label="开始" className="flex w-[54px] items-center justify-center">
        <Icon w={25} h={24}><path d="M0 3l10.500-1.500v10H0zM12 1.300L25 0v11.500H12zM0 12.800h10.500v10L0 21.200zM12 12.800h13V24l-13-1.500z" fill="#000" /></Icon>
      </button>
      <button type="button" aria-label="搜索" className="flex w-[54px] items-center justify-center">
        <Icon w={25} h={25}><circle cx="16" cy="9" r="8" stroke="#000" strokeWidth="1.600" /><path d="M10.500 14.500L1 24" stroke="#000" strokeWidth="1.600" /></Icon>
      </button>
      <div className="ml-[4px] flex">
        {APPS.map((a) => (
          <button key={a.name} type="button" aria-label={a.name} className={clsx('flex w-[57px] flex-col items-center', a.state === 'active' && 'bg-[#fbfafd]')}>
            <span className="flex h-[43px] items-center">{a.icon}</span>
            <span className={clsx('flex h-[3px] bg-[#0a78d4]', a.state === 'active' ? 'w-full' : 'w-[43px]')}>
              {a.state === 'multi' && <span className="ml-auto w-[12px] bg-[#62a8e4]" />}
            </span>
          </button>
        ))}
      </div>
      <div className="ml-auto flex items-center">
        <button type="button" aria-label="显示隐藏的图标">
          <Icon w={20} h={12}><path d="M1 11l9-9 9 9" stroke="#000" strokeWidth="1.500" /></Icon>
        </button>
        <Icon w={24} h={20} className="ml-[13px]">
          <path d="M5 4.500h18v11H8" stroke="#000" strokeWidth="1.300" /><path d="M7 6h14v8H6.500z" fill="#000" /><path d="M22.500 8h1.500v4h-1.500z" fill="#000" />
          <path d="M1 4h6v4L5 10H3L1 8zM2.500 1v3M5.500 1v3M4 10v5" fill="#e9e4f1" stroke="#000" strokeWidth="1.300" />
        </Icon>
        <Icon w={24} h={22} className="ml-[12px]">
          <path d="M1 8h3l5-6v18l-5-6H1z" stroke="#000" strokeWidth="1.300" />
          <path d="M13 8c1.500 2 1.500 4 0 6M16 5.500c3 3.500 3 7.500 0 11M19.500 3c4.500 5 4.500 11 0 16" stroke="#000" strokeWidth="1.300" />
        </Icon>
        <Icon w={20} h={20} className="ml-[14px]">
          <path d="M1 19C1 9 8 1.500 18 1M5 19.500C5.500 11.500 10.500 6.500 18 6M10 19.500c.5-5 3.500-8 8-8.500" stroke="#333" strokeWidth="1.300" />
          <circle cx="16.500" cy="17" r="2.200" fill="#000" />
        </Icon>
        <span className="ml-[11px] text-2xl leading-none text-[#555]">英</span>
        <Icon w={26} h={26} className="ml-[19px]">
          <path d="M4 3.500L19 .5c2-.3 3 .5 3.500 2.500L25 19c.3 2-.5 3.300-2.500 3.700L8 25.500c-2 .3-3.200-.5-3.700-2.500L1.500 7C1.200 5 2 4 4 3.500z" fill="#2fb516" />
          <path d="M19.500 6c-5-1-10.500 0-10.300 3 .3 3 9.500 2 9.800 6 .2 3.500-6 4.500-11 3.500" stroke="#fff" strokeWidth="3.800" />
        </Icon>
        <span className="ml-[25px] text-xl leading-none">16:54</span>
        <button type="button" aria-label="通知" className="ml-[27px]">
          <Icon w={25} h={25}><path d="M0 1h25v18h-9l-4 5-4-5H0z" fill="#000" /><path d="M5 6h15M5 10h15M5 14h10" stroke="#fff" strokeWidth="1.400" /></Icon>
        </button>
        <div className="ml-[30px] h-[46px] w-[7px] border-l-2 border-[#bdb8c6]" />
      </div>
    </footer>
  );
}

export default function App() {
  return (
    <div className="relative flex h-screen flex-col overflow-hidden bg-[#424242] [font-family:'Noto_Sans','Noto_Sans_CJK_SC',sans-serif]">
      <MenuBar />
      <OptionsBar />
      <div className="flex min-h-0 flex-1">
        <ToolsPanel />
        <DocumentArea />
        <RightDock />
      </div>
      <HistoryPanel />
      <LayersPanel />
      <Taskbar />
    </div>
  );
}
